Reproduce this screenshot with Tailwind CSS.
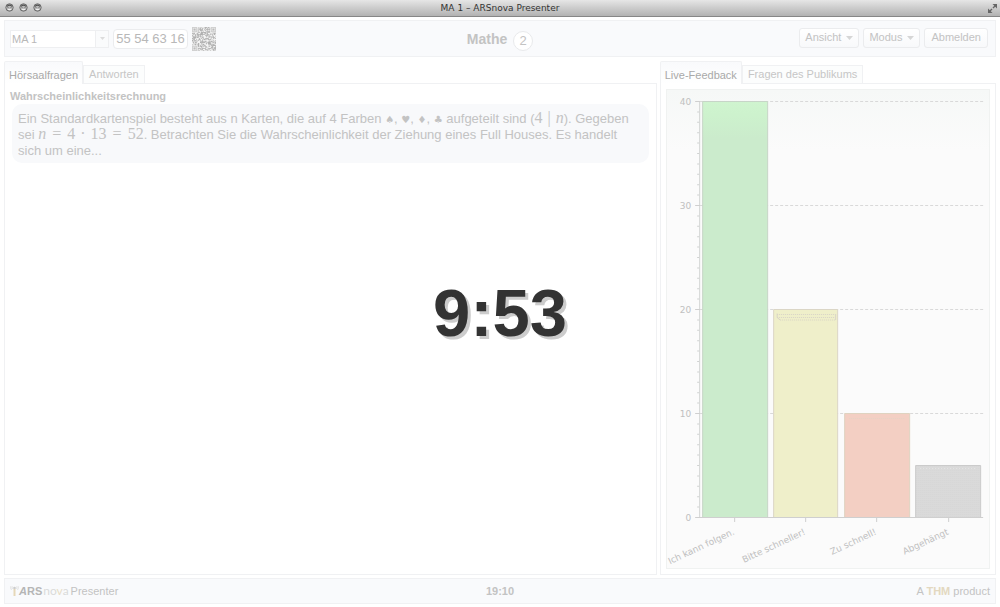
<!DOCTYPE html>
<html lang="de">
<head>
<meta charset="utf-8">
<title>MA 1 – ARSnova Presenter</title>
<script src="https://cdn.jsdelivr.net/npm/@tailwindcss/browser@4"></script>
</head>
<body class="flex h-screen flex-col overflow-hidden bg-white font-['Liberation_Sans',Arial,sans-serif] text-[11px] text-[#c3c3c3]">

<div class="grid h-[17px] shrink-0 grid-cols-3 items-center border-b border-[#868686] bg-linear-to-b from-[#e6e6e6] to-[#b2b2b2] px-[5px]">
  <div class="-mt-px flex gap-[5px]">
    <svg width="9" height="9" viewBox="0 0 9 9"><circle cx="4.500" cy="4.500" r="3.700" fill="#b9b9b9" stroke="#6c6c6c"/><path d="M2 3.500a3 3 0 0 1 5 0" fill="none" stroke="#4d4d4d" stroke-width="1.200"/><path d="M2.500 4.500h1M5.500 4.500h1" stroke="#777"/><path d="M3 6.500h3" stroke="#eee"/></svg>
    <svg width="9" height="9" viewBox="0 0 9 9"><circle cx="4.500" cy="4.500" r="3.700" fill="#b9b9b9" stroke="#6c6c6c"/><path d="M2 3.500a3 3 0 0 1 5 0" fill="none" stroke="#4d4d4d" stroke-width="1.200"/><path d="M2.500 4.500h1M5.500 4.500h1" stroke="#777"/><path d="M3 6.500h3" stroke="#eee"/></svg>
    <svg width="9" height="9" viewBox="0 0 9 9"><circle cx="4.500" cy="4.500" r="3.700" fill="#b9b9b9" stroke="#6c6c6c"/><path d="M2 3.500a3 3 0 0 1 5 0" fill="none" stroke="#4d4d4d" stroke-width="1.200"/><path d="M2.500 4.500h1M5.500 4.500h1" stroke="#777"/><path d="M3 6.500h3" stroke="#eee"/></svg>
  </div>
  <div class="text-center font-['DejaVu_Sans',sans-serif] text-[9px] leading-[14px] whitespace-nowrap text-[#333]">MA 1 – ARSnova Presenter</div>
  <svg class="-mr-[3px] justify-self-end" width="11" height="11" viewBox="0 0 11 11" fill="#666" stroke="#666" stroke-width="1.400"><path d="M5.500 1H10v4.500z" stroke="none"/><path d="M6 5l3-3M5 6l-3 3" fill="none"/><path d="M1 5.500V10h4.500z" stroke="none"/></svg>
</div>

<div class="relative flex min-h-0 grow flex-col px-1 pt-[3px] pb-[3px]">
  <header class="grid h-[37px] shrink-0 grid-cols-3 items-center border border-[#f0f1f3] bg-[#f9fafc] px-[5px]">
    <div class="flex items-center gap-1">
      <div class="relative h-[18px] w-[99px] border border-[#eeeff1] bg-white">
        <select aria-label="Veranstaltung" class="block h-4 w-full appearance-none pl-px text-[11px] leading-4 text-[#b8b8b8]"><option>MA 1</option></select>
        <span class="pointer-events-none absolute inset-y-0 right-0 flex w-[13px] items-center justify-center border-l border-[#eeeff1] bg-[#fafbfc]"><svg width="5" height="3"><path d="M0 0h5l-2.500 3z" fill="#dcdcdc"/></svg></span>
      </div>
      <div class="flex items-center gap-1">
        <span class="flex h-5 w-[75px] items-center justify-center rounded-[4px] border border-[#ebecee] bg-white text-[13px] whitespace-nowrap text-[#b8b8b8]">55 54 63 16</span>
        <svg id="qr" role="img" aria-label="QR-Code" width="24" height="24" viewBox="0 0 33 33"></svg>
      </div>
    </div>
    <div class="flex items-center justify-center gap-[6px]">
      <h1 class="text-[14px] leading-4 font-bold">Mathe</h1>
      <span class="mt-[5px] flex size-5 items-center justify-center rounded-full border border-[#e9eaec] bg-white text-[13px]">2</span>
    </div>
    <div class="-mt-[2px] flex justify-end gap-1 pr-[2px]">
      <button class="flex h-5 items-center gap-[5px] rounded-[3px] border border-[#ebecee] bg-linear-to-b from-white to-[#f8f9fb] px-[5px]">Ansicht<svg width="7" height="4"><path d="M0 0h7l-3.500 4z" fill="#d6d6d6"/></svg></button>
      <button class="flex h-5 items-center gap-[5px] rounded-[3px] border border-[#ebecee] bg-linear-to-b from-white to-[#f8f9fb] px-[5px]">Modus<svg width="7" height="4"><path d="M0 0h7l-3.500 4z" fill="#d6d6d6"/></svg></button>
      <button class="flex h-5 items-center rounded-[3px] border border-[#ebecee] bg-linear-to-b from-white to-[#f8f9fb] px-[6px]">Abmelden</button>
    </div>
  </header>

  <main class="mt-1 flex min-h-0 grow gap-[3px]">
    <section class="flex min-w-0 grow flex-col">
      <div role="tablist" class="flex h-[22px] shrink-0 items-end">
        <button role="tab" aria-selected="true" class="relative z-10 -mb-px flex h-[23px] items-center rounded-t-[2px] border border-b-0 border-[#f0f1f3] bg-linear-to-b from-[#f9fafc] to-white px-1 pt-[4px] text-[#a9a9a9]">Hörsaalfragen</button>
        <button role="tab" aria-selected="false" class="flex h-[18px] items-center border border-b-0 border-[#f0f1f3] bg-[#fcfdfd] px-[5px] text-[#c6c6c6]">Antworten</button>
      </div>
      <div class="grow border border-[#f0f1f3] px-[5px] pt-[4px]">
        <h2 class="text-[11px] leading-4 font-bold">Wahrscheinlichkeitsrechnung</h2>
        <div class="mx-[2px] rounded-[10px] bg-[#f8f9fb] px-[6px] pt-[7px] pb-[4px] text-[13px] leading-4">
          <p>Ein Standardkartenspiel besteht aus n Karten, die auf 4 Farben <span class="font-['DejaVu_Sans',sans-serif] text-[10px] leading-3">♠</span>, <span class="font-['DejaVu_Sans',sans-serif] text-[10px] leading-3">♥</span>, <span class="font-['DejaVu_Sans',sans-serif] text-[10px] leading-3">♦</span>, <span class="font-['DejaVu_Sans',sans-serif] text-[10px] leading-3">♣</span> aufgeteilt sind (<span class="font-['Liberation_Serif',serif] text-[16px] leading-3">4<span class="mx-[5px]">|</span><i>n</i></span>). Gegeben<br>sei <span class="font-['Liberation_Serif',serif] text-[16px] leading-3"><i>n</i><span class="mx-[6px]">=</span>4<span class="mx-[5px]">·</span>13<span class="mx-[6px]">=</span>52</span>. Betrachten Sie die Wahrscheinlichkeit der Ziehung eines Full Houses. Es handelt<br>sich um eine...</p>
        </div>
      </div>
    </section>

    <section class="flex w-[33.9%] shrink-0 flex-col">
      <div role="tablist" class="flex h-[22px] shrink-0 items-end">
        <button role="tab" aria-selected="true" class="relative z-10 -mb-px flex h-[23px] items-center rounded-t-[2px] border border-b-0 border-[#f0f1f3] bg-linear-to-b from-[#f9fafc] to-white px-1 pt-[4px] text-[#a9a9a9]">Live-Feedback</button>
        <button role="tab" aria-selected="false" class="flex h-[18px] items-center border border-b-0 border-[#f0f1f3] bg-[#fcfdfd] px-[5px] text-[#c6c6c6]">Fragen des Publikums</button>
      </div>
      <div class="min-h-0 grow border border-[#f0f1f3] p-[5px]">
        <svg class="block h-full w-full border border-[#f0f2f1] bg-[#fbfbfb]" viewBox="667 90 322 478" role="img" aria-label="Live-Feedback: Ich kann folgen 40, Bitte schneller 20, Zu schnell 10, Abgehängt 5">
          <defs>
            <linearGradient id="haze" x2="0" y2="1"><stop offset="0" stop-color="#f6f8f7"/><stop offset="1" stop-color="#fbfbfb"/></linearGradient>
            <linearGradient id="green" x2="0" y2="1"><stop offset="0" stop-color="#cff4cf"/><stop offset=".03" stop-color="#cdf2cd"/><stop offset=".09" stop-color="#cbebcc"/></linearGradient>
            <pattern id="dots" width="2" height="2" patternUnits="userSpaceOnUse"><path d="M0 0h2v2H0z" fill="#dadada"/><path d="M0 0h1v1H0z" fill="#d6d6d6"/></pattern>
          </defs>
          <path d="M666 90h325v60H666z" fill="url(#haze)"/>
          <path d="M700 101.500H984M700 205.500H984M700 309.500H984M700 413.500H984" stroke="#d9d9d9" stroke-dasharray="3 2"/>
          <path d="M702.500 101.500h65v416h-65z" fill="url(#green)" stroke="#c7d5c8"/>
          <path d="M773.500 309.500h64v208h-64z" fill="#efefca" stroke="#dbd6c6"/>
          <path d="M777 314.500h58M777 317.500h58M780 320h55" fill="none" stroke="#d7d3c6" stroke-dasharray="1 1"/>
          <path d="M777 313.500v4l3 2.500M835.500 314v6" fill="none" stroke="#d9d4c8"/>
          <path d="M844.500 413.500h65v104h-65z" fill="#f3cfc3" stroke="#dfd3c0"/>
          <path d="M849 418.500h56" stroke="#e5d3c4" stroke-dasharray="1 1"/>
          <path d="M915.500 465.500h65v52h-65z" fill="url(#dots)" stroke="#cbcbcb"/>
          <path d="M920 468.500h57" stroke="#e5e5e5" stroke-dasharray="1 2"/>
          <path d="M699.500 101V517" stroke="#d3d5d4"/>
          <path d="M698 101V517" stroke="#d0d2d1" stroke-width="2" stroke-dasharray="1 9.400"/>
          <path d="M695 101.500h5M695 205.500h5M695 309.500h5M695 413.500h5M695 517.500H983M734.500 518v4M805.500 518v4M876.500 518v4M948.500 518v4" stroke="#cfcfcf"/>
          <g fill="#c0c0c0" font-family="'DejaVu Sans',sans-serif" font-size="9" text-anchor="end">
            <text x="691" y="105">40</text><text x="691" y="209">30</text><text x="691" y="313">20</text><text x="691" y="417">10</text><text x="691" y="521">0</text>
            <text transform="translate(735 534) rotate(-25)">Ich kann folgen.</text>
            <text transform="translate(806 534) rotate(-25)">Bitte schneller!</text>
            <text transform="translate(877 534) rotate(-25)">Zu schnell!</text>
            <text transform="translate(949 534) rotate(-25)">Abgehängt</text>
          </g>
        </svg>
      </div>
    </section>
  </main>

  <footer class="mt-[3px] grid h-[26px] shrink-0 grid-cols-3 items-center border border-[#f0f1f3] bg-[#f9fafc] px-[5px]">
    <div class="flex items-center">
      <svg width="9" height="12" viewBox="0 0 9 12" fill="none"><path d="M1 1Q0 3 1.500 5M2.500 1.500Q1.500 3 2.500 4M8 1q1 2-.5 4M6.500 1.500q1 1.500 0 2.500" stroke="#e3e3e3"/><path d="M4.500 4v7" stroke="#e6d8b8" stroke-width="2"/><circle cx="4.500" cy="3" r="1.300" fill="#ccc"/></svg>
      <span class="text-[11px] font-bold text-[#b5b5b5]"><i>A</i>RS</span>
      <span class="mr-[2px] ml-px font-['Lato',sans-serif] text-[12px] text-[#dadada]">no<span class="text-[#e8ddc6]">v</span>a</span>
      <span>Presenter</span>
    </div>
    <div class="text-center text-[11px] font-bold">19:10</div>
    <div class="text-right">A <a href="#" class="font-bold text-[#e3d8c0]">THM</a> product</div>
  </footer>

  <div role="timer" class="pointer-events-none absolute inset-0 z-20 flex items-center justify-center text-[67px] leading-none font-bold text-[#333] [text-shadow:3px_3px_0_#ccc]">9:53</div>
</div>

<script>
  // Fill the code with modules and add its three finder squares.
  let seed = 7, d = '';
  const finder = (x, y) => (x < 8 && y < 8) || (x > 24 && y < 8) || (x < 8 && y > 24);
  for (let y = 0; y < 33; y++) for (let x = 0; x < 33; x++) {
    seed = (seed * 1103515245 + 12345) % 2147483648;
    if (!finder(x, y) && seed / 2147483648 > 0.46) d += `M${x} ${y}h1v1h-1z`;
  }
  let f = '';
  for (const [x, y] of [[0, 0], [26, 0], [0, 26]])
    f += `<path d="M${x + .5} ${y + .5}h6v6h-6z" fill="none" stroke="#bbb"/><path d="M${x + 2} ${y + 2}h3v3h-3z" fill="#bbb"/>`;
  document.getElementById('qr').innerHTML = `<path d="M0 0h33v33H0z" fill="#f4f4f4"/><path d="${d}" fill="#b0b0b0"/>` + f;
</script>
</body>
</html>
